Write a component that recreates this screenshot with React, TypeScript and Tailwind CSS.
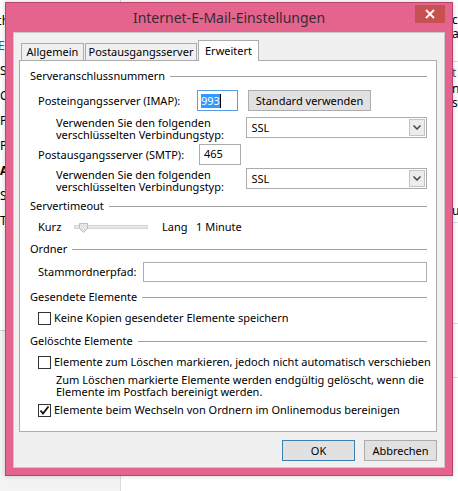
import type { FC, ReactNode } from "react";

const GroupHeader: FC<{ title: string; className?: string }> = ({ title, className }) => {
  return (
    <div className={`flex h-4 items-center gap-[5px] ${className ?? ""}`}>
      <span className="whitespace-nowrap leading-4">{title}</span>
      <div className="h-px flex-1 bg-[#a0a0a0]" />
    </div>
  );
};

const Checkbox: FC<{ checked?: boolean }> = ({ checked }) => {
  return (
    <div className="flex size-[13px] shrink-0 items-center justify-center border border-[#333] bg-white">
      {checked && (
        <svg width="11" height="11" viewBox="0 0 11 11">
          <path d="M1.5 5.5 L4 8.5 L9.5 1.5" fill="none" stroke="#111" strokeWidth="1.8" />
        </svg>
      )}
    </div>
  );
};

const SelectBox: FC<{ value: string }> = ({ value }) => {
  return (
    <div className="flex h-[21px] w-[181px] items-center border border-[#acacac] bg-white pl-[4px] pr-[1px]">
      <span className="flex-1 leading-4">{value}</span>
      <div className="flex h-[17px] w-[16px] items-center justify-center border border-[#c4c4c4] bg-[#ececec]">
        <svg width="8" height="5" viewBox="0 0 8 5">
          <path d="M0.5 0.5 L4 4 L7.5 0.5" fill="none" stroke="#444" strokeWidth="1.5" />
        </svg>
      </div>
    </div>
  );
};

const Button: FC<{ children: ReactNode; className?: string }> = ({ children, className }) => {
  return (
    <div
      className={`flex h-[21px] items-center justify-center border bg-[#e1e1e1] leading-4 ${className ?? ""}`}
    >
      {children}
    </div>
  );
};

const Tab: FC<{ label: string; active?: boolean; className?: string }> = ({ label, active, className }) => {
  return (
    <div
      className={`flex items-center justify-center border border-b-0 border-[#acacac] leading-4 whitespace-nowrap ${
        active ? "relative z-10 -mb-px h-[21px] bg-white" : "h-[17px] bg-[#f0f0f0]"
      } ${className ?? ""}`}
    >
      {label}
    </div>
  );
};

const BackgroundApp: FC = () => {
  return (
    <div className="flex h-[491px] w-[458px] bg-white">
      <div className="flex w-[120px] flex-col">
        <div className="h-[330px] overflow-hidden text-[12px] leading-[25px] text-black">
          <div className="h-[8px]" />
          <p className="-ml-[4px]">ch</p>
          <p className="-ml-[2px] text-[#1e5aa8]">E-</p>
          <p>Se</p>
          <p>Co</p>
          <p>Po</p>
          <p>Po</p>
          <p className="font-bold">Ar</p>
          <p>Se</p>
          <p>Te</p>
        </div>
        <div className="flex-1 border-t border-[#d0d0d0] bg-[#f3f3f3]" />
      </div>
      <div className="flex-1 border-l border-[#dadada]">
        <div className="flex h-full justify-end">
          <div className="flex w-[6px] flex-col overflow-hidden text-[12px] leading-[14px]">
            <p className="mt-[13px]">c</p>
            <p>a</p>
            <div className="mt-[20px] h-px bg-[#ddd]" />
            <p className="mt-[4px] text-[#555]">t</p>
            <p className="mt-[2px]">ng</p>
            <p>st</p>
            <p className="mt-[94px]">us</p>
            <div className="mt-[4px] h-px bg-[#ddd]" />
            <div className="mt-[100px] h-px bg-[#ddd]" />
            <div className="mt-[53px] h-px bg-[#ddd]" />
          </div>
        </div>
      </div>
    </div>
  );
};

export default function App() {
  return (
    <div className="relative h-[491px] w-[458px] overflow-hidden font-['Noto_Sans',sans-serif] text-[11px] text-black">
      <BackgroundApp />

      {/* dialog window */}
      <div className="absolute top-[2px] left-[5px] flex h-[474px] w-[448px] flex-col border border-[#b8456d] bg-[#e4648e] shadow-[0_0_5px_rgba(0,0,0,0.2)]">
        <div className="relative flex h-[29px] items-center justify-center">
          <span className="text-[14px] text-[#3a2a30]">Internet-E-Mail-Einstellungen</span>
          <div className="absolute top-[2px] right-[7px] flex h-[18px] w-[30px] items-center justify-center bg-[#c75050]">
            <svg width="10" height="10" viewBox="0 0 10 10">
              <path d="M1 1 L9 9 M9 1 L1 9" stroke="#fff" strokeWidth="1.8" />
            </svg>
          </div>
        </div>

        <div className="mx-[7px] flex h-[436px] flex-col border border-[#c8c8c8] bg-[#f0f0f0] pt-[7px] pr-[7px] pl-[5px]">
          {/* tabs */}
          <div className="flex items-end pl-[2px]">
            <Tab label="Allgemein" className="w-[63px]" />
            <Tab label="Postausgangsserver" className="ml-px w-[112px]" />
            <Tab label="Erweitert" active className="ml-px w-[61px]" />
          </div>

          {/* tab panel */}
          <div className="flex h-[372px] flex-col border border-[#acacac] bg-white pr-[9px] pl-[10px] whitespace-nowrap">
            <GroupHeader title="Serveranschlussnummern" className="mt-[7px]" />

            <div className="mt-[6px] flex h-[21px] items-center pl-[8px]">
              <span className="w-[159px] leading-4">Posteingangsserver (IMAP):</span>
              <div className="flex h-[21px] w-[41px] items-center border border-[#569de5] bg-white pl-[3px]">
                <span className="bg-[#3399ff] leading-[14px] text-white">993</span>
                <span className="h-[14px] w-px bg-black" />
              </div>
              <Button className="ml-[10px] w-[123px] border-[#adadad]">Standard verwenden</Button>
            </div>

            <div className="mt-[6px] flex items-start pl-[26px]">
              <div className="w-[191px] leading-[12px]">
                <p>Verwenden Sie den folgenden</p>
                <p>verschlüsselten Verbindungstyp:</p>
              </div>
              <SelectBox value="SSL" />
            </div>

            <div className="mt-[3px] flex h-[21px] items-center pl-[8px]">
              <span className="w-[161px] leading-4">Postausgangsserver (SMTP):</span>
              <div className="flex h-[21px] w-[42px] items-center border border-[#acacac] bg-white pl-[4px]">
                465
              </div>
            </div>

            <div className="mt-[3px] flex items-start pl-[26px]">
              <div className="mt-px w-[191px] leading-[12px]">
                <p>Verwenden Sie den folgenden</p>
                <p>verschlüsselten Verbindungstyp:</p>
              </div>
              <SelectBox value="SSL" />
            </div>

            <GroupHeader title="Servertimeout" className="mt-[5px]" />

            <div className="mt-[5px] flex h-4 items-center pl-[8px]">
              <span className="w-[36px] leading-4">Kurz</span>
              <div className="relative h-[4px] w-[74px] border border-[#d6d6d6] bg-[#e7e7e7]">
                <svg className="absolute -top-[3px] left-[4px]" width="9" height="10" viewBox="0 0 9 10">
                  <path d="M0.5 0.5 H8.5 V5.5 L4.5 9.5 L0.5 5.5 Z" fill="#e5e5e5" stroke="#bcbcbc" />
                </svg>
              </div>
              <span className="ml-[14px] w-[34px] leading-4">Lang</span>
              <span className="leading-4">1 Minute</span>
            </div>

            <GroupHeader title="Ordner" className="mt-[6px]" />

            <div className="mt-[5px] flex h-[20px] items-center pl-[8px]">
              <span className="w-[105px] leading-4">Stammordnerpfad:</span>
              <div className="h-[20px] flex-1 border border-[#acacac] bg-white" />
            </div>

            <GroupHeader title="Gesendete Elemente" className="mt-[7px]" />

            <div className="mt-[5px] flex h-4 items-center gap-[3px] pl-[8px]">
              <Checkbox />
              <span className="leading-4">Keine Kopien gesendeter Elemente speichern</span>
            </div>

            <GroupHeader title="Gelöschte Elemente" className="mt-[7px]" />

            <div className="mt-[5px] flex h-4 items-center gap-[3px] pl-[8px]">
              <Checkbox />
              <span className="leading-4">Elemente zum Löschen markieren, jedoch nicht automatisch verschieben</span>
            </div>

            <div className="mt-[4px] pl-[26px] leading-[12px]">
              <p>Zum Löschen markierte Elemente werden endgültig gelöscht, wenn die</p>
              <p>Elemente im Postfach bereinigt werden.</p>
            </div>

            <div className="mt-[4px] flex h-4 items-center gap-[3px] pl-[8px]">
              <Checkbox checked />
              <span className="leading-4">Elemente beim Wechseln von Ordnern im Onlinemodus bereinigen</span>
            </div>
          </div>

          {/* dialog buttons */}
          <div className="mt-[8px] flex justify-end gap-[9px]">
            <Button className="w-[73px] border-[#3c7fb1]">OK</Button>
            <Button className="w-[73px] border-[#adadad]">Abbrechen</Button>
          </div>
        </div>
      </div>
    </div>
  );
}
